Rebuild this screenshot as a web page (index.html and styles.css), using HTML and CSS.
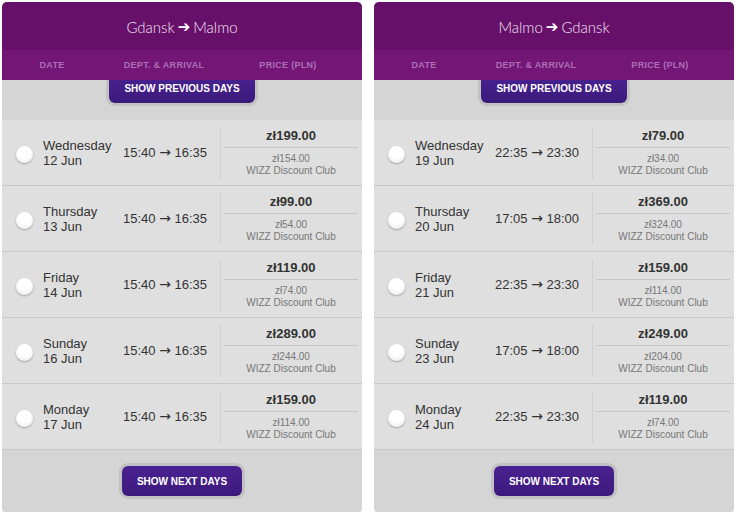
FILE: index.html
```html
<!DOCTYPE html>
<html lang="en">
<head>
    <meta charset="UTF-8">
    <meta name="viewport" content="width=device-width, initial-scale=1.0">
    <title>Flight dates</title>
    <link rel="stylesheet" href="styles.css">
</head>
<body>

<div class="flights">

    <div class="panel">
        <div class="panel-head">
            <div class="route">Gdansk <span class="arrow">&#10132;</span> Malmo</div>
            <div class="columns">
                <span>Date</span>
                <span>Dept. &amp; Arrival</span>
                <span class="col-price">Price (PLN)</span>
            </div>
        </div>
        <div class="more more-prev">
            <button class="more-button">Show previous days</button>
        </div>

        <div class="day">
            <span class="radio"></span>
            <div class="date">Wednesday<br>12 Jun</div>
            <div class="times">15:40 <span class="to">&rarr;</span> 16:35</div>
            <div class="price">
                <div class="fare">zł199.00</div>
                <div class="club">zł154.00<br>WIZZ Discount Club</div>
            </div>
        </div>
        <div class="day">
            <span class="radio"></span>
            <div class="date">Thursday<br>13 Jun</div>
            <div class="times">15:40 <span class="to">&rarr;</span> 16:35</div>
            <div class="price">
                <div class="fare">zł99.00</div>
                <div class="club">zł54.00<br>WIZZ Discount Club</div>
            </div>
        </div>
        <div class="day">
            <span class="radio"></span>
            <div class="date">Friday<br>14 Jun</div>
            <div class="times">15:40 <span class="to">&rarr;</span> 16:35</div>
            <div class="price">
                <div class="fare">zł119.00</div>
                <div class="club">zł74.00<br>WIZZ Discount Club</div>
            </div>
        </div>
        <div class="day">
            <span class="radio"></span>
            <div class="date">Sunday<br>16 Jun</div>
            <div class="times">15:40 <span class="to">&rarr;</span> 16:35</div>
            <div class="price">
                <div class="fare">zł289.00</div>
                <div class="club">zł244.00<br>WIZZ Discount Club</div>
            </div>
        </div>
        <div class="day">
            <span class="radio"></span>
            <div class="date">Monday<br>17 Jun</div>
            <div class="times">15:40 <span class="to">&rarr;</span> 16:35</div>
            <div class="price">
                <div class="fare">zł159.00</div>
                <div class="club">zł114.00<br>WIZZ Discount Club</div>
            </div>
        </div>

        <div class="more more-next">
            <button class="more-button">Show next days</button>
        </div>
    </div>

    <div class="panel">
        <div class="panel-head">
            <div class="route">Malmo <span class="arrow">&#10132;</span> Gdansk</div>
            <div class="columns">
                <span>Date</span>
                <span>Dept. &amp; Arrival</span>
                <span class="col-price">Price (PLN)</span>
            </div>
        </div>
        <div class="more more-prev">
            <button class="more-button">Show previous days</button>
        </div>

        <div class="day">
            <span class="radio"></span>
            <div class="date">Wednesday<br>19 Jun</div>
            <div class="times">22:35 <span class="to">&rarr;</span> 23:30</div>
            <div class="price">
                <div class="fare">zł79.00</div>
                <div class="club">zł34.00<br>WIZZ Discount Club</div>
            </div>
        </div>
        <div class="day">
            <span class="radio"></span>
            <div class="date">Thursday<br>20 Jun</div>
            <div class="times">17:05 <span class="to">&rarr;</span> 18:00</div>
            <div class="price">
                <div class="fare">zł369.00</div>
                <div class="club">zł324.00<br>WIZZ Discount Club</div>
            </div>
        </div>
        <div class="day">
            <span class="radio"></span>
            <div class="date">Friday<br>21 Jun</div>
            <div class="times">22:35 <span class="to">&rarr;</span> 23:30</div>
            <div class="price">
                <div class="fare">zł159.00</div>
                <div class="club">zł114.00<br>WIZZ Discount Club</div>
            </div>
        </div>
        <div class="day">
            <span class="radio"></span>
            <div class="date">Sunday<br>23 Jun</div>
            <div class="times">17:05 <span class="to">&rarr;</span> 18:00</div>
            <div class="price">
                <div class="fare">zł249.00</div>
                <div class="club">zł204.00<br>WIZZ Discount Club</div>
            </div>
        </div>
        <div class="day">
            <span class="radio"></span>
            <div class="date">Monday<br>24 Jun</div>
            <div class="times">22:35 <span class="to">&rarr;</span> 23:30</div>
            <div class="price">
                <div class="fare">zł119.00</div>
                <div class="club">zł74.00<br>WIZZ Discount Club</div>
            </div>
        </div>

        <div class="more more-next">
            <button class="more-button">Show next days</button>
        </div>
    </div>

</div>

</body>
</html>
```

FILE: styles.css
```css
body {
    margin: 0;
    padding: 2px;
    background-color: #fff;
    font-family: "Liberation Sans", Arial, sans-serif;
    color: #333;
}

.flights {
    display: flex;
    gap: 12px;
}

.panel {
    width: 360px;
    height: 510px;
    background-color: #d5d5d5;
    border-radius: 5px 5px 3px 3px;
    overflow: hidden;
}

/* purple heading with the route and column titles */
.panel-head {
    position: relative;
    z-index: 1;
}

.route {
    height: 48px;
    display: flex;
    align-items: center;
    justify-content: center;
    background-color: #66106a;
    color: #f1e2f1;
    font-family: Lato, "Open Sans", sans-serif;
    font-size: 15px;
    font-weight: 300;
    padding-top: 2px;
    box-sizing: border-box;
}

.arrow {
    font-family: "DejaVu Sans", sans-serif;
    font-size: 15px;
    font-weight: bold;
    margin: 0 3px;
    color: #fff;
}

.columns {
    height: 30px;
    display: grid;
    grid-template-columns: 100px 124px 1fr;
    align-items: center;
    background-color: #731676;
    color: #ad70b6;
    font-size: 9px;
    font-weight: bold;
    text-transform: uppercase;
    text-align: center;
    letter-spacing: 0.3px;
}

.col-price {
    padding-right: 12px;
}

/* show previous / next days */
.more {
    display: flex;
    justify-content: center;
}

.more-prev {
    height: 40px;
}

.more-prev .more-button {
    margin-top: -7px;
}

.more-next {
    height: 62px;
    align-items: center;
}

.more-button {
    height: 30px;
    padding: 0 15px;
    border: none;
    border-radius: 6px;
    background: linear-gradient(#4a2292, #3c1a7c);
    box-shadow: 0 0 0 3px #c2c2c2;
    color: #fff;
    font-family: "Liberation Sans", Arial, sans-serif;
    font-size: 10px;
    font-weight: bold;
    text-transform: uppercase;
    cursor: pointer;
}

/* one row per day */
.day {
    height: 65px;
    display: flex;
    align-items: center;
    background-color: #dfdfdf;
    border-bottom: 1px solid #c8c8c8;
}

.radio {
    width: 17px;
    height: 17px;
    margin: 3px 10px 0 14px;
    border-radius: 50%;
    background: radial-gradient(circle at 50% 35%, #fff 40%, #e6e6e6 100%);
    box-shadow: 0 1px 2px rgba(0, 0, 0, 0.3);
    flex-shrink: 0;
}

.date {
    width: 80px;
    font-size: 13px;
    line-height: 15px;
}

.times {
    width: 97px;
    font-size: 13px;
    line-height: 15px;
    white-space: nowrap;
}

.to {
    font-family: "DejaVu Sans", sans-serif;
    font-size: 14px;
    line-height: 10px;
}

.price {
    flex: 1;
    align-self: stretch;
    margin: 7px 0 6px;
    padding: 0 4px 0 3px;
    border-left: 1px solid #d0d0d0;
    text-align: center;
}

.fare {
    height: 20px;
    line-height: 18px;
    border-bottom: 1px solid #c6c6c6;
    font-size: 13px;
    font-weight: bold;
    color: #333;
}

.club {
    padding-top: 5px;
    font-size: 10px;
    line-height: 12px;
    color: #777;
}
```
